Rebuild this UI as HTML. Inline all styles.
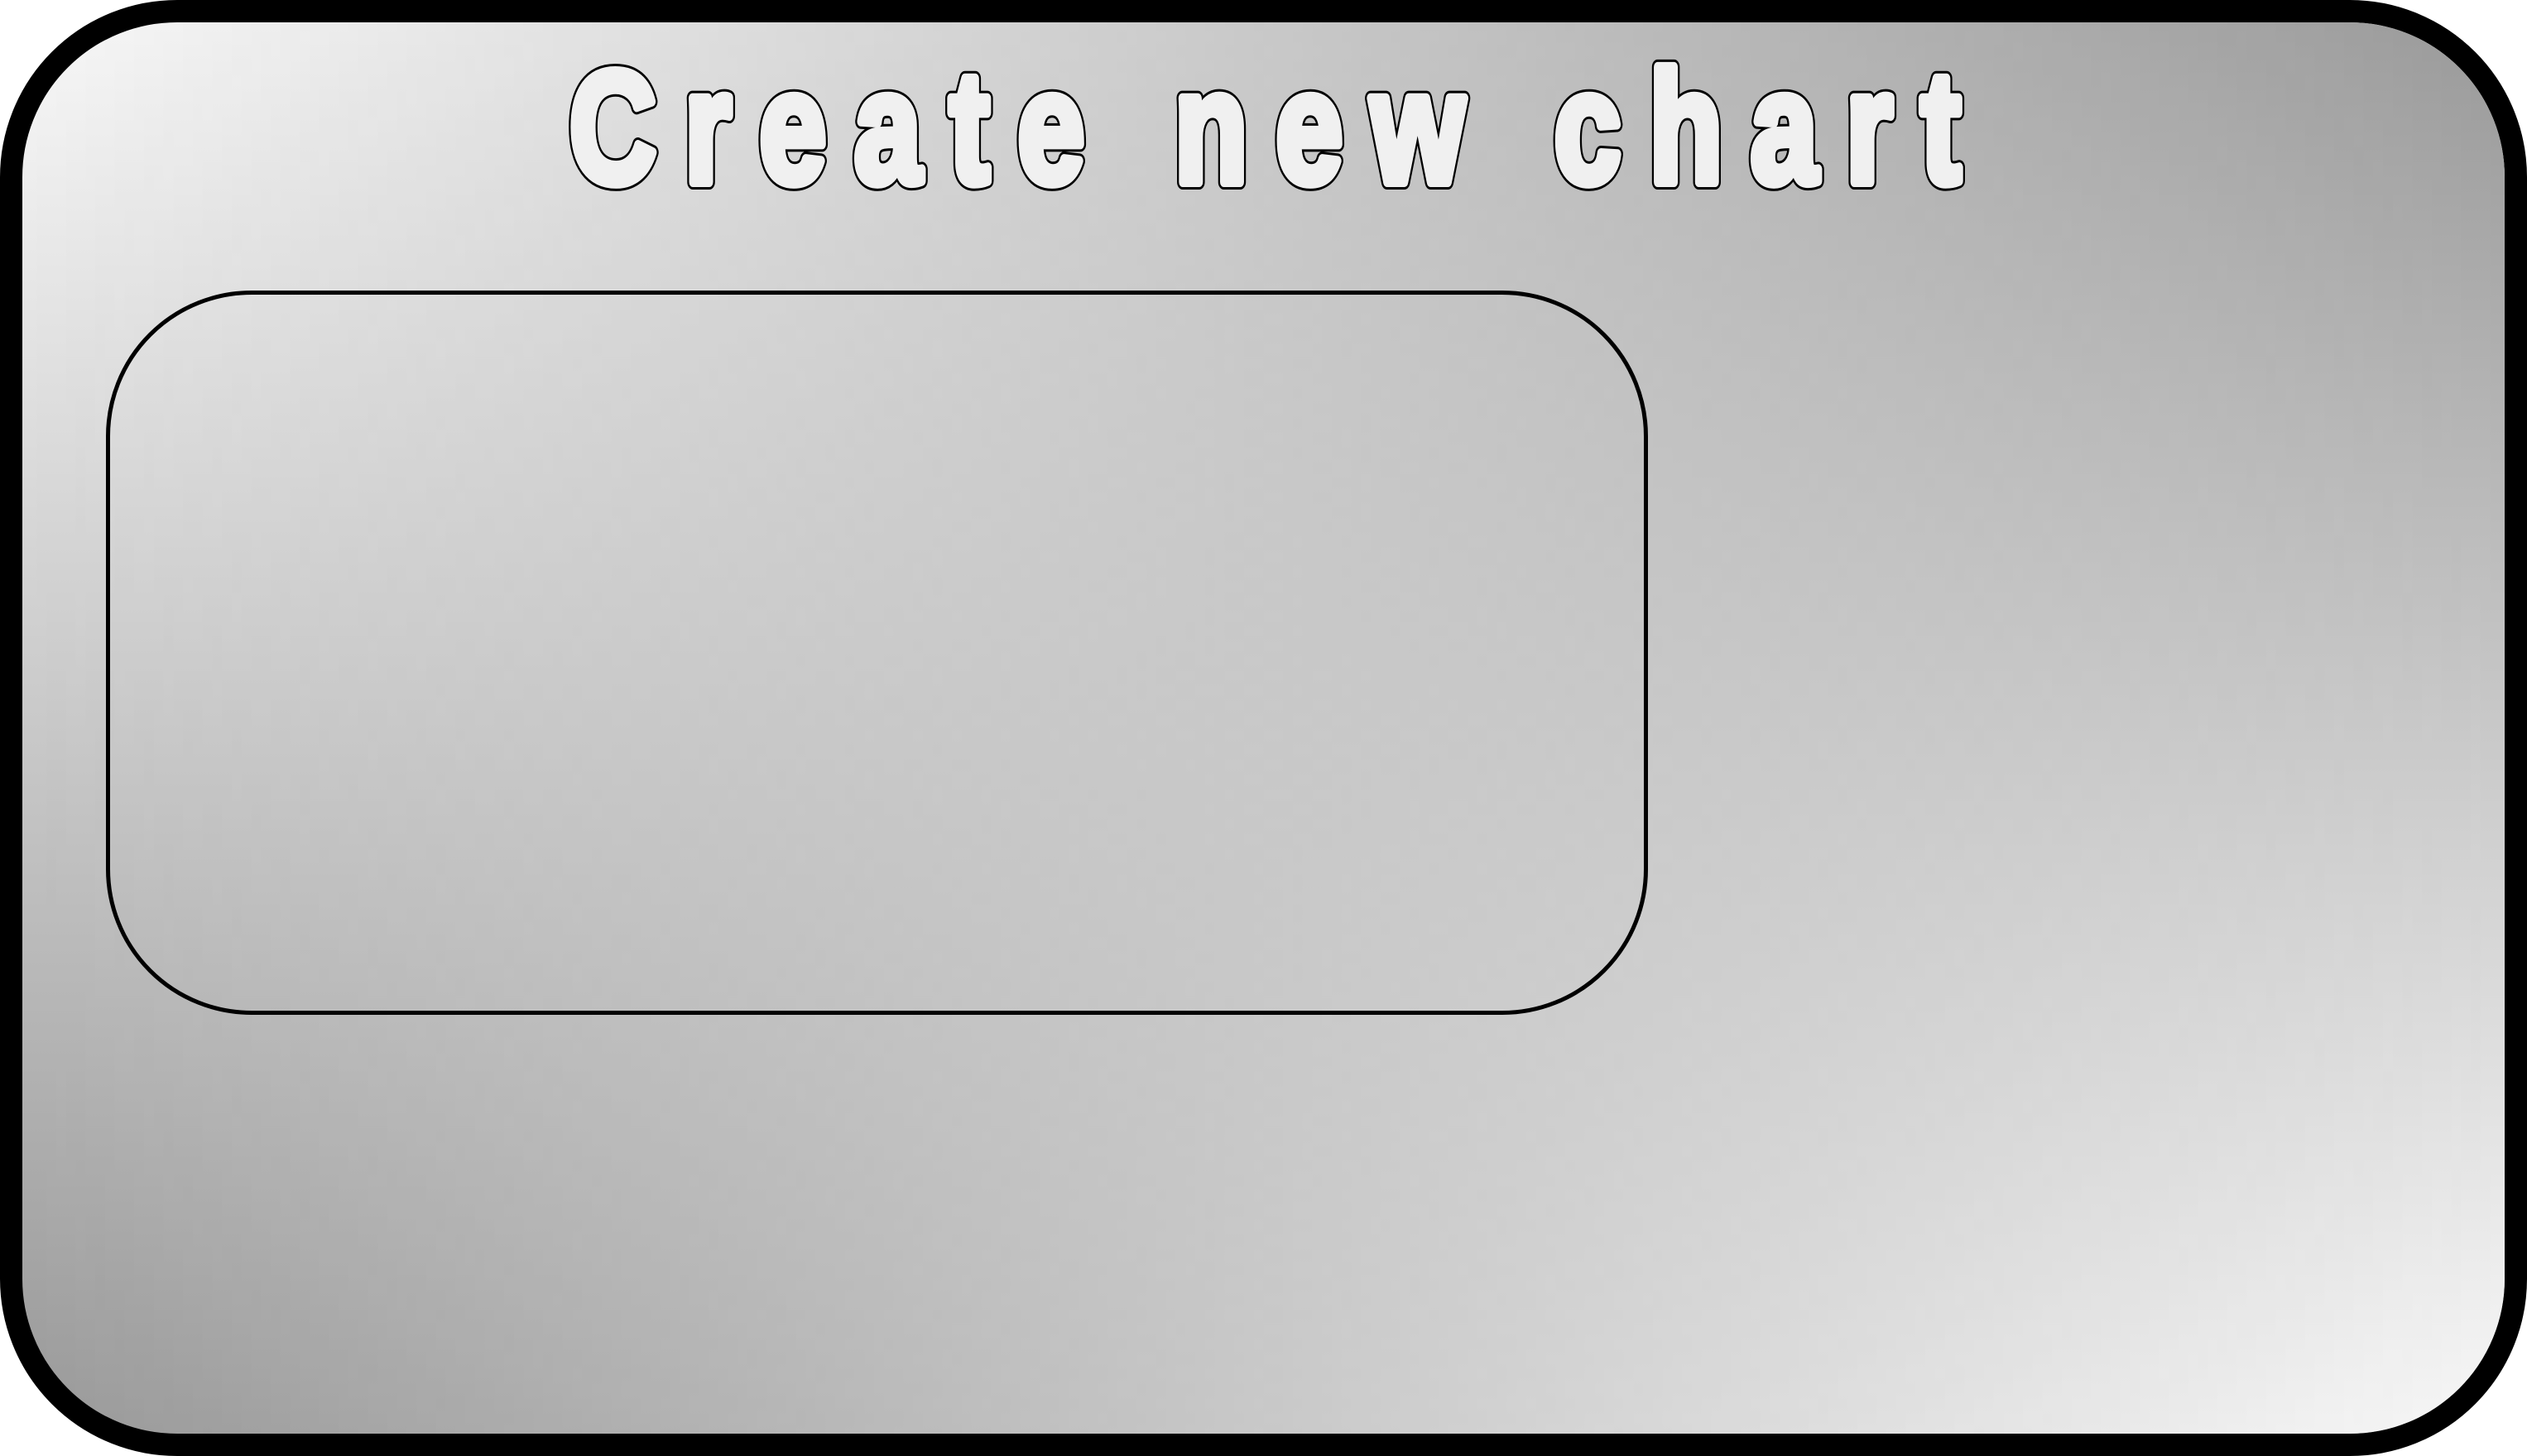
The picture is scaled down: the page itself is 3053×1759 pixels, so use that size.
<!DOCTYPE html>
<html><head><style>
html,body{margin:0;padding:0;width:3053px;height:1759px;overflow:hidden;background:#fff}
.card{position:absolute;left:0;top:0;width:3053px;height:1759px;box-sizing:border-box;border:27px solid #000;border-radius:214px;overflow:hidden;
background:linear-gradient(to bottom,#f8f8f8,#999999);}
.layer{position:absolute;left:0;top:0;right:0;bottom:0;background:linear-gradient(to bottom,#999999,#f8f8f8);
-webkit-mask-image:linear-gradient(to right,transparent,#000);mask-image:linear-gradient(to right,transparent,#000);}
.inner{position:absolute;left:128px;top:351px;width:1863px;height:875px;box-sizing:border-box;border:5px solid #000;border-radius:176px;}
svg{position:absolute;left:0;top:0}
</style></head><body>
<div class="card"><div class="layer"></div></div>
<div class="inner"></div>
<svg width="3053" height="1759">
<g font-family="'Liberation Sans',sans-serif" font-weight="bold" font-size="192" letter-spacing="45">
<text x="688" y="220" textLength="1715" lengthAdjust="spacingAndGlyphs" fill="#000" stroke="#000" stroke-width="18" stroke-linejoin="round">Create new chart</text>
<text x="688" y="220" textLength="1715" lengthAdjust="spacingAndGlyphs" fill="#f0f0f0" stroke="#f0f0f0" stroke-width="12" stroke-linejoin="round">Create new chart</text>
</g>
</svg>
</body></html>
